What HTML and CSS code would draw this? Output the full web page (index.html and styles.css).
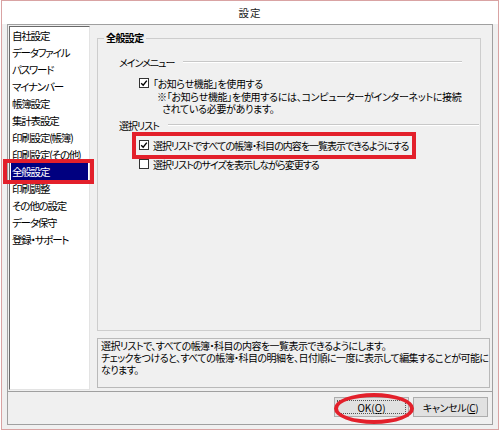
FILE: index.html
```html
<!DOCTYPE html>
<html lang="ja">
<head>
<meta charset="utf-8">
<title>設定</title>
<link rel="stylesheet" href="styles.css">
</head>
<body>
<div class="window">
  <div class="titlebar">設定</div>
  <div class="client">
    <div class="frame">
      <div class="main">
        <ul class="list">
          <li>自社設定</li>
          <li>データファイル</li>
          <li>パスワード</li>
          <li>マイナンバー</li>
          <li>帳簿設定</li>
          <li>集計表設定</li>
          <li>印刷設定(帳簿)</li>
          <li>印刷設定(その他)</li>
          <li class="selected">全般設定</li>
          <li>印刷調整</li>
          <li>その他の設定</li>
          <li>データ保守</li>
          <li>登録・サポート</li>
        </ul>
        <div class="right">
          <fieldset class="group">
            <legend>全般設定</legend>
            <div class="section sec-menu"><span>メインメニュー</span></div>
            <label class="check check1"><span class="box"><svg width="8" height="8" viewBox="0 0 8 8"><path d="M1.2 4.2 L3.2 6.2 L6.8 1.6" stroke="#000" stroke-width="1.4" fill="none"/></svg></span>「お知らせ機能」を使用する</label>
            <p class="note">※「お知らせ機能」を使用するには、コンピューターがインターネットに接続<br><span class="note2">されている必要があります。</span></p>
            <div class="section sec-list"><span>選択リスト</span></div>
            <label class="check check2"><span class="box"><svg width="8" height="8" viewBox="0 0 8 8"><path d="M1.2 4.2 L3.2 6.2 L6.8 1.6" stroke="#000" stroke-width="1.4" fill="none"/></svg></span>選択リストですべての帳簿・科目の内容を一覧表示できるようにする</label>
            <label class="check check3"><span class="box"></span>選択リストのサイズを表示しながら変更する</label>
          </fieldset>
          <div class="desc">選択リストで、すべての帳簿・科目の内容を一覧表示できるようにします。<br>チェックをつけると、すべての帳簿・科目の明細を、日付順に一度に表示して編集することが可能に<br>なります。</div>
        </div>
      </div>
      <div class="buttons">
        <button class="btn btn-ok">OK(<u>O</u>)</button>
        <button class="btn btn-cancel">キャンセル(<u>C</u>)</button>
      </div>
    </div>
  </div>
  <div class="mark mark-list"></div>
  <div class="mark mark-check"></div>
  <div class="mark mark-ok"></div>
</div>
</body>
</html>
```
FILE: styles.css
```css
* { box-sizing: border-box; }
html, body { margin: 0; padding: 0; background: #fff; }
body {
  font-family: "Noto Sans CJK JP", "Noto Sans", sans-serif;
  font-size: 10px;
  color: #000;
  font-feature-settings: "palt";
}
.window {
  position: relative;
  width: 498px;
  height: 430px;
  margin-left: 1px;
  border: 1px solid #d9a3a3;
  background: #f0f0f0;
  display: flex;
  flex-direction: column;
}
.titlebar {
  height: 23px;
  background: #fff;
  text-align: center;
  line-height: 24px;
  font-size: 10.5px;
  letter-spacing: 1px;
  color: #222;
}
.client { flex: 1; padding: 0 5px 4px 5px; }
.frame {
  height: 100%;
  border: 1px solid #a0a0a0;
  display: flex;
  flex-direction: column;
}
.main {
  height: 366px;
  display: flex;
  padding: 1px 11px 0 1px;
}
.list {
  flex: none;
  list-style: none;
  margin: 0;
  width: 81px;
  height: 364px;
  background: #fff;
  border: 1px solid;
  border-color: #696969 #e3e3e3 #e3e3e3 #696969;
  padding: 0 1px;
  overflow: hidden;
}
.list li {
  height: 17px;
  line-height: 17px;
  padding-left: 1px;
  white-space: nowrap;
  font-size: 10.5px;
  letter-spacing: -1.2px;
}
.list li.selected { background: #000080; color: #fff; }
.right {
  margin-left: 7px;
  flex: 1;
  min-width: 0;
  display: flex;
  flex-direction: column;
}
.group {
  margin: 6px 0 0 0;
  height: 299px;
  border: 1px solid #cdcdcd;
  padding: 11px 18px 0 0;
  min-width: 0;
}
.group legend {
  margin-left: 6px;
  padding: 0 2px;
  font-weight: bold;
  line-height: 12px;
  letter-spacing: -0.6px;
}
.section {
  display: flex;
  align-items: center;
  height: 14px;
  padding-left: 21px;
  white-space: nowrap;
}
.section span { letter-spacing: -1px; }
.section::after {
  content: "";
  flex: 1;
  height: 0;
  border-top: 1px solid #c8c8c8;
  border-bottom: 1px solid #fff;
  margin-left: 9px;
}
.sec-list { margin-top: 3px; margin-right: -17px; }
.check {
  display: flex;
  align-items: center;
  height: 14px;
  padding-left: 41px;
  margin-top: 7px;
  white-space: nowrap;
  letter-spacing: -1px;
}
.check1 { letter-spacing: -0.4px; }
.check2 { margin-top: 6px; }
.check3 { margin-top: 5px; }
.box {
  width: 10px;
  height: 10px;
  border: 1px solid #333;
  background: #fff;
  margin-right: 4px;
  display: flex;
  align-items: center;
  justify-content: center;
}
.box svg { display: block; }
.note {
  margin: 1px 0 0 0;
  padding-left: 59px;
  line-height: 12px;
  white-space: nowrap;
  letter-spacing: -0.3px;
}
.note2 { padding-left: 5px; }
.desc {
  margin: 7px -9px 0 0;
  height: 50px;
  border: 1px solid #b9b9b9;
  padding: 1px 3px 0;
  line-height: 12px;
  white-space: nowrap;
  overflow: hidden;
  letter-spacing: -0.55px;
}
.buttons {
  flex: 1;
  border-top: 1px solid #a0a0a0;
  display: flex;
  justify-content: flex-end;
  align-items: flex-start;
  padding: 5px 4px 0 0;
  gap: 4px;
}
.btn {
  width: 75px;
  height: 20px;
  border: 1px solid #adadad;
  background: #e1e1e1;
  font-family: inherit;
  font-size: 10px;
  font-feature-settings: "palt";
  color: #000;
  padding: 0;
}
.btn-cancel { letter-spacing: -0.4px; }
.btn-ok { outline: 1px dotted #555; outline-offset: -4px; }
.mark {
  position: absolute;
  border: 4px solid #e3202b;
}
.mark-list { left: 1px; top: 158px; width: 91px; height: 25px; }
.mark-check { left: 130px; top: 131px; width: 284px; height: 27px; }
.mark-ok { left: 332px; top: 392px; width: 80px; height: 31px; border-radius: 50%; }
```
